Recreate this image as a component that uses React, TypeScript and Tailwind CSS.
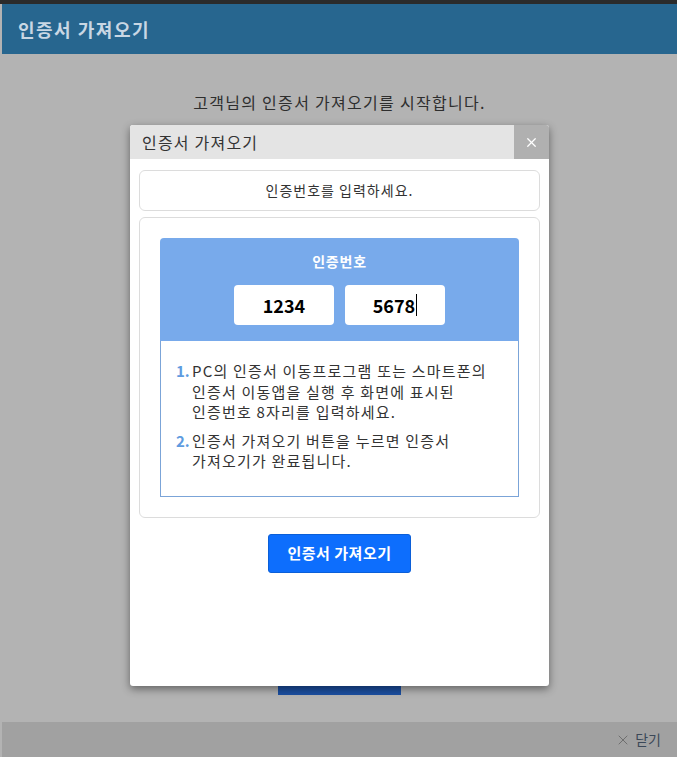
import { X } from "lucide-react";

const font = { fontFamily: '"Noto Sans CJK KR", "Noto Sans", sans-serif' };

const steps = [
  ["PC의 인증서 이동프로그램 또는 스마트폰의", "인증서 이동앱을 실행 후 화면에 표시된", "인증번호 8자리를 입력하세요."],
  ["인증서 가져오기 버튼을 누르면 인증서", "가져오기가 완료됩니다."],
];

const CodeInput = ({ value, caret }: { value: string; caret?: boolean }) => (
  <div className="flex h-[40px] w-[100px] items-center justify-center rounded-[4px] bg-white text-[18px] font-bold text-black">
    <span>{value}</span>
    {caret && <span className="ml-[1px] h-[22px] w-[1px] bg-black" />}
  </div>
);

const App = () => {
  return (
    <div className="relative h-[757px] w-[677px] overflow-hidden bg-[#b3b3b3]" style={font}>
      {/* page behind the overlay */}
      <div className="flex h-full flex-col">
        <div className="h-[4px] bg-[#2b2b2b]" />
        <div className="ml-[2px] flex h-[50px] items-center bg-[#27668f] px-[16px]">
          <h1 className="text-[18px] font-bold tracking-[1.5px] text-[#c9d7e4]">인증서 가져오기</h1>
        </div>
        <div className="flex flex-1 flex-col items-center pl-[2px] pt-[36px]">
          <p className="text-[16px] tracking-[1.3px] text-[#2e2e2e]">고객님의 인증서 가져오기를 시작합니다.</p>
          <div className="mt-[537px] h-[44px] w-[123px] bg-[#1b4fa1]" />
        </div>
        <div className="ml-[2px] flex h-[35px] items-center justify-end gap-[4px] bg-[#a1a1a1] pr-[16px] text-[14px] text-[#3b4858]">
          <X size={16} strokeWidth={1} className="text-[#555]" />
          <span>닫기</span>
        </div>
      </div>

      {/* modal */}
      <div className="absolute left-[130px] top-[125px] flex h-[561px] w-[419px] flex-col overflow-hidden rounded-[3px] bg-white shadow-[0_3px_8px_rgba(0,0,0,0.45)]">
        <div className="flex h-[34px] items-center justify-between bg-[#e4e4e4]">
          <h2 className="pl-[12px] text-[16px] tracking-[1.2px] text-[#333]">인증서 가져오기</h2>
          <button className="flex h-[34px] w-[35px] items-center justify-center bg-[#b0b0b0] text-white">
            <X size={15} strokeWidth={2} />
          </button>
        </div>

        <div className="flex flex-col px-[9px] pt-[11px]">
          <div className="flex h-[41px] items-center justify-center rounded-[6px] border border-[#dcdcdc] text-[14px] tracking-[1px] text-[#333]">
            인증번호를 입력하세요.
          </div>

          <div className="mt-[6px] rounded-[6px] border border-[#dcdcdc] p-[20px]">
            <div className="overflow-hidden rounded-t-[4px]">
              <div className="flex h-[103px] flex-col items-center bg-[#78aaeb] pt-[13px]">
                <span className="text-[14px] font-bold tracking-[0.8px] text-white">인증번호</span>
                <div className="mt-[13px] flex gap-[11px]">
                  <CodeInput value="1234" />
                  <CodeInput value="5678" caret />
                </div>
              </div>
              <ol className="flex h-[156px] flex-col gap-[8px] border border-t-0 border-[#7ba4d8] px-[15px] pt-[20px] text-[15px] leading-[20.5px] tracking-[1.2px] text-[#333]">
                {steps.map((lines, i) => (
                  <li key={i} className="flex">
                    <span className="w-[16px] shrink-0 font-semibold tracking-normal text-[#5e9be0]">{i + 1}.</span>
                    <div className="flex flex-col">
                      {lines.map((l) => (
                        <span key={l}>{l}</span>
                      ))}
                    </div>
                  </li>
                ))}
              </ol>
            </div>
          </div>

          <div className="flex justify-center pt-[16px]">
            <button className="h-[39px] w-[143px] rounded-[3px] border border-[#0b5fd8] bg-[#0d6efd] text-[15px] font-bold tracking-[0.5px] text-white">
              인증서 가져오기
            </button>
          </div>
        </div>
      </div>
    </div>
  );
};

export default App;
